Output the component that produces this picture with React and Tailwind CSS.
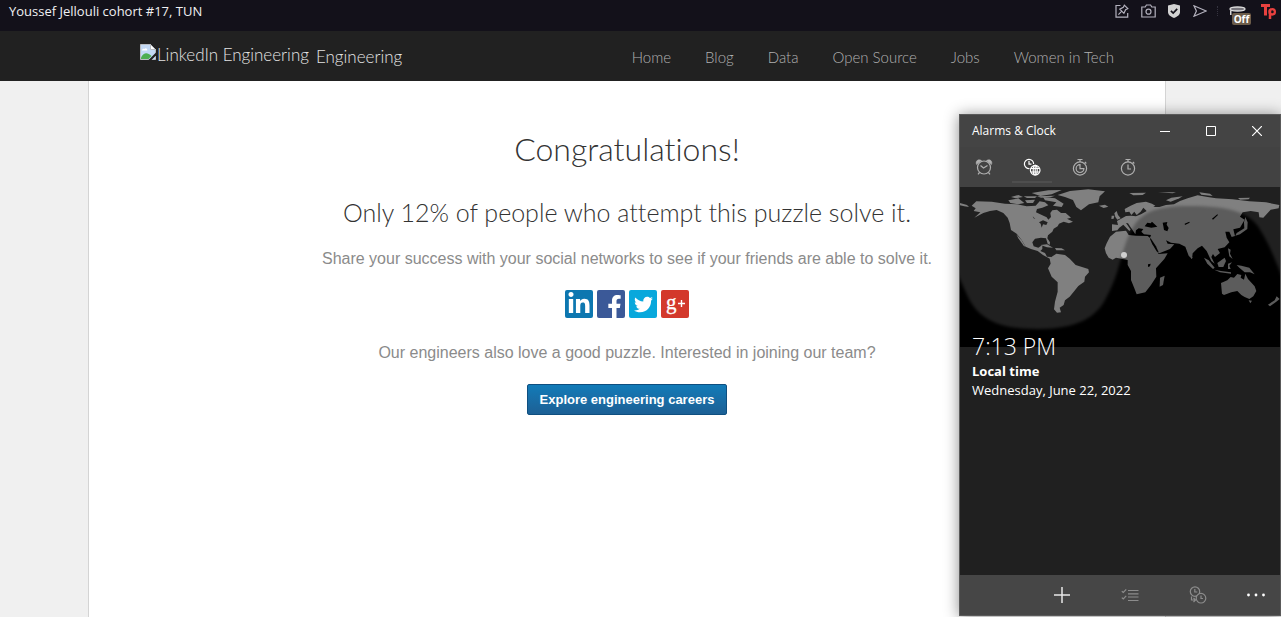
import React from "react";
import { FaFacebookF, FaLinkedinIn, FaTwitter } from "react-icons/fa";

const NAV = ["Home", "Blog", "Data", "Open Source", "Jobs", "Women in Tech"];

function TopBar() {
  return (
    <header className="flex h-[31px] items-start justify-between bg-[#13111a] pl-[9px]">
      <p className="font-['Open_Sans','Noto_Sans',sans-serif] text-[13px] leading-[23px] text-[#f0f0f2]">
        Youssef Jellouli cohort #17, TUN
      </p>
      <div className="flex items-start text-[#b4b2be]">
        <button aria-label="Pin" className="flex h-[22px] w-[26px] items-center justify-center">
          <svg width="14" height="14" viewBox="0 0 14 14" fill="none" stroke="currentColor" strokeWidth="1.2">
            <path d="M5.5 1.5H1v11.7h11.7V9" />
            <path d="M9.3 1.2 12.8 4.7 10.6 5.8 8.9 9.3 4.8 5.2 8.3 3.4zM6.8 7.2 3.4 10.7" />
          </svg>
        </button>
        <button aria-label="Snapshot" className="flex h-[22px] w-[26px] items-center justify-center">
          <svg width="15" height="14" viewBox="0 0 15 14" fill="none" stroke="currentColor" strokeWidth="1.2">
            <path d="M.8 3h3.4l1.2-2h4.2l1.2 2h3.4v10H.8z" />
            <circle cx="7.5" cy="7.7" r="2.5" />
          </svg>
        </button>
        <button aria-label="Blocker" className="flex h-[22px] w-[26px] items-center justify-center">
          <svg width="14" height="14" viewBox="0 0 14 14">
            <path d="M7 0 13 1.6V8c0 3-3 4.800-6 6C4 12.800 1 11 1 8V1.600z" fill="#d3d3d3" />
            <path d="M3.900 6.800 6.200 9 10.200 4.800" fill="none" stroke="#13111a" strokeWidth="1.700" />
          </svg>
        </button>
        <button aria-label="Send" className="flex h-[22px] w-[26px] items-center justify-center">
          <svg width="14" height="12" viewBox="0 0 14 12" fill="none" stroke="currentColor" strokeWidth="1.200">
            <path d="M1 .8 13.200 6 1 11.200 3.400 6z" />
          </svg>
        </button>
        <span className="mx-1 mt-1.5 h-2.5 border-l border-dotted border-[#35333f]" />
        <button aria-label="Extension off" className="mt-1 flex w-[35px] justify-center">
          <svg width="24" height="22" viewBox="0 0 24 22">
            <path d="M2 6v5h1.500V7" fill="#d8d8d8" />
            <ellipse cx="9.500" cy="5" rx="7.500" ry="2" fill="#77757c" stroke="#dcdcdc" strokeWidth="1.300" />
            <rect x="4" y="9" width="19" height="12" rx="2" fill="#6d5d4a" />
            <text x="13.500" y="19" textAnchor="middle" fontSize="10" fontWeight="700" fontFamily="Open Sans, sans-serif" fill="#fff">Off</text>
          </svg>
        </button>
        <button aria-label="Extension" className="mt-[3px] flex w-6 justify-center">
          <svg width="18" height="16" viewBox="0 0 18 16" fill="none" stroke="#e8413f" strokeWidth="3">
            <path d="M1 2.500h9M5.500 2v10.500" />
            <path d="M10 16V6.500" strokeWidth="2.500" />
            <circle cx="12.200" cy="8.800" r="2.700" strokeWidth="2.300" />
          </svg>
        </button>
      </div>
    </header>
  );
}

function BrokenImage() {
  return (
    <svg width="16" height="16" viewBox="0 0 16 16" aria-hidden="true">
      <path d="M.5.5h10l5 5v10H.5z" fill="#c3d9f5" stroke="#b9bcc0" />
      <path d="M2 6.500c0-2 2-2 2.500-1.500 1-1.500 3-.5 2.800 1.500z" fill="#fff" />
      <path d="M1 15v-1.500C4 8.500 7 8 11.500 12L8.500 15z" fill="#4cae50" />
      <path d="M10.500.5v5h5z" fill="#fff" stroke="#b9bcc0" />
      <path d="M8.500 16 16 8.500v3L11.500 16z" fill="#212121" />
    </svg>
  );
}

function SiteHeader() {
  return (
    <div className="bg-[#212121] pr-[27px] font-[Lato,sans-serif] font-light">
      <div className="mx-auto flex h-[50px] max-w-[974px] items-start justify-between">
        <a href="#engineering" className="flex pt-3 text-[17px] leading-6 text-[#e4e4e4]">
          <span className="pt-px"><BrokenImage /></span>
          <span className="pl-px">LinkedIn Engineering</span>
          <span className="pt-0.5 pl-[7px]">Engineering</span>
        </a>
        <nav className="flex gap-[34px] pt-4 text-[15px] leading-5 text-[#b0b0b0]">
          {NAV.map((n) => (
            <a key={n} href="#nav">{n}</a>
          ))}
        </nav>
      </div>
    </div>
  );
}

function Social() {
  const tile = "flex size-7 justify-center rounded-xs text-white";
  return (
    <div className="mt-[19px] flex justify-center gap-1">
      <a href="#linkedin" aria-label="LinkedIn" className={`${tile} items-center bg-[#0d77b0]`}><FaLinkedinIn size={24} /></a>
      <a href="#facebook" aria-label="Facebook" className={`${tile} items-end bg-[#3b5998] pl-[7px]`}><FaFacebookF size={23} /></a>
      <a href="#twitter" aria-label="Twitter" className={`${tile} items-center bg-[#08a8dc]`}><FaTwitter size={19} /></a>
      <a href="#google" aria-label="Google Plus" className={`${tile} items-center bg-[#d3382b]`}>
        <svg width="28" height="28" viewBox="0 0 28 28" className="overflow-visible">
          <text x="5" y="19" fontSize="21" fontFamily="Liberation Serif, serif" fill="#fff" stroke="#fff" strokeWidth=".3">g</text>
          <path d="M17 13.500h7M20.500 10v7" stroke="#fff" strokeWidth="1.400" />
        </svg>
      </a>
    </div>
  );
}

const EAST = [
  "-28,175 -18,155 0,140 30,137 38,150 60,152 95,153 103,160 110,175 118,190 128,207 155,205 145,222 120,250 121,275 105,300 88,322 62,328 55,310 45,285 45,258 35,240 35,225 20,222 0,218 -10,224 -22,218 -30,205 -34,190",
  "132,278 146,272 141,300 131,305",
  "-12,138 -12,118 6,120 3,108 18,100 30,93 45,92 60,94 75,88 92,78 82,68 74,80 62,90 55,80 46,90 40,80 28,82 26,72 44,62 62,54 90,50 108,56 118,62 112,66 130,66 150,60 174,58 192,48 215,40 245,31 275,36 300,40 350,43 400,49 450,52 490,60 488,70 464,74 442,98 430,97 428,82 404,78 380,82 372,95 386,104 372,128 352,133 357,153 347,156 340,140 328,140 332,158 340,172 326,187 305,192 312,204 297,216 291,207 286,216 296,236 286,228 272,198 258,182 245,190 230,205 228,222 218,212 208,185 190,176 165,173 150,166 155,176 175,178 162,192 130,205 124,202 108,172 102,158 105,150 84,148 76,140 82,132 68,130 60,136 58,148 50,136 36,115 30,114 44,134 40,138 22,119 10,128 4,136",
  "-2,96 -5,85 2,78 6,90 14,100 4,104", "-13,92 -5,92 -7,101 -14,102",
  "388,96 395,112 394,132 372,148 358,152 362,144 385,130 384,112",
  "264,218 278,226 296,248 291,252 274,236", "295,254 315,258 345,262 345,266 312,262",
  "304,234 326,218 330,228 322,246 308,246", "336,236 348,232 340,242 344,252 336,252",
  "336,190 344,194 342,206 350,222 340,214", "362,240 376,242 400,248 416,268 402,262 386,262 370,248",
  "315,294 334,286 344,276 354,278 364,267 376,270 374,278 384,284 388,266 396,282 416,304 421,318 412,334 400,342 386,336 376,330 364,318 346,322 324,330 318,326",
  "398,346 408,347 403,355", "482,334 491,342 481,350 462,364 456,359 476,346", "224,212 230,218 226,222",
  "40,24 90,23 80,30 52,31", "150,46 166,38 200,34 190,40 164,50", "250,22 282,26 290,33 256,29", "366,39 402,38 398,43 372,44", "126,22 180,22 170,25",
];
const WEST = [
  "50,62 64,49 110,50 150,56 186,58 215,64 242,62 254,49 270,52 280,61 262,68 246,72 243,82 262,91 275,97 280,104 288,96 286,84 292,76 306,74 318,84 332,84 348,98 336,101 354,110 342,115 326,110 312,116 308,124 296,131 292,140 279,151 277,160 285,172 284,180 278,176 273,160 258,158 240,161 232,172 236,184 250,188 262,180 262,192 256,198 270,204 276,215 290,216 286,222 264,210 248,198 228,192 212,185 200,165 185,146 168,135 164,114 158,98 145,84 125,75 105,78 85,84 58,98 76,82 56,78 62,70",
  "284,220 304,206 330,210 345,222 362,240 400,252 402,262 390,275 388,290 370,303 355,322 344,335 330,346 326,360 314,368 318,382 306,383 297,373 300,350 308,320 308,292 290,275 279,250 287,236",
  "308,30 345,18 400,13 450,19 434,34 430,52 402,58 378,76 364,66 354,45 330,36",
  "256,180 276,178 294,188 276,187", "300,189 320,190 330,196 304,196", "432,62 450,59 460,65 446,69",
  "160,46 190,40 208,54 190,58 166,54", "168,36 190,30 204,36 182,40", "210,46 240,44 234,54 216,54",
  "206,34 246,34 240,39 216,39", "230,24 280,16 320,15 290,28 256,33", "264,36 300,40 326,56 320,66 294,62 304,52 270,46",
  "246,34 300,32 286,37 258,38", "184,148 200,166 212,186 206,182 190,160", "15,54 36,60 42,66 28,64 15,61",
];

function Land({ color }) {
  return (
    <g fill={color}>
      <g transform="translate(156 -2) scale(.3333)">{EAST.map((p) => <polygon key={p} points={p} />)}</g>
      <g transform="translate(-5 -2) scale(.3333)">{WEST.map((p) => <polygon key={p} points={p} />)}</g>
    </g>
  );
}

function Lakes({ color }) {
  return (
    <g transform="translate(156 -2) scale(.3333)" fill={color}>
      <path d="M86 124l8-11 10 2 4-5 16 15-18 3zM140 113l14-2-2 8 6 10-4 10-10-4-2-12zM96 238l8-2-2 8-6 2z" />
      <path d="M206 116l14-6 1 3-14 7zM288 101l16-13 2 2-15 14z" />
      <path d="M-231 112l12-6 14 6-4 8-10-2-4 10-3-12zM-250 94l8 8-5-2z" />
      <path d="M104 160l16 24 8 18-5-2-14-22-7-16z" />
    </g>
  );
}

function WorldMap() {
  return (
    <svg viewBox="0 0 320 160" className="block w-full" role="img" aria-label="World map">
      <defs>
        <filter id="soft" x="-10%" y="-10%" width="120%" height="120%"><feGaussianBlur stdDeviation="1.800" /></filter>
        <mask id="day">
          <path filter="url(#soft)" fill="#fff" d="M-12-15H332V112C316 78 314 66 302 46C292 25 270 19 229 19C194 19 180 26 171 44C160 65 161 84 146 111C137 130 117 142 78 142C41 142 20 134 8 110L-12 66z" />
        </mask>
      </defs>
      <rect width="320" height="160" fill="#000" />
      <Land color="#5c5c5c" />
      <Lakes color="#000" />
      <g mask="url(#day)">
        <rect width="320" height="160" fill="#202020" />
        <Land color="#808080" />
        <Lakes color="#202020" />
      </g>
      <circle cx="164" cy="68" r="3" fill="#d0d0d0" />
    </svg>
  );
}

function Icon({ children }) {
  return (
    <svg width="18" height="18" viewBox="0 0 18 18" fill="none" stroke="currentColor" strokeWidth="1.200">
      {children}
    </svg>
  );
}

function ClockWindow() {
  const tab = "flex h-10 w-12 items-center justify-center";
  const win = "flex h-8 w-[46px] items-center justify-center";
  const cmd = "flex h-10 w-[68px] items-center justify-center";
  return (
    <section className="absolute top-[114px] right-0 bottom-px flex w-[322px] flex-col border border-[#5a5a5a] bg-[#202020] font-['Open_Sans','Noto_Sans',sans-serif] text-white shadow-[0_1px_14px_rgba(0,0,0,0.45)]">
      <div className="flex items-center bg-[#444]">
        <h2 className="flex-1 pl-3 text-[12px] leading-8">Alarms &amp; Clock</h2>
        <button aria-label="Minimize" className={win}><svg width="10" height="10"><path d="M0 5.500h10" stroke="#fff" /></svg></button>
        <button aria-label="Maximize" className={win}><svg width="10" height="10"><path d="M.5.5h9v9h-9z" fill="none" stroke="#fff" /></svg></button>
        <button aria-label="Close" className={win}><svg width="10" height="10"><path d="M0 0l10 10M10 0L0 10" stroke="#fff" strokeWidth="1.200" /></svg></button>
      </div>
      <div className="flex bg-[#424242] text-[#b0b0b0]">
        <button aria-label="Alarm" className={tab}>
          <Icon>
            <circle cx="9" cy="9.500" r="6.500" />
            <path d="M5.500 7.500 8.500 10 12.500 7.500M4.500 14.500l-1.500 1.800M13.500 14.500l1.500 1.800" />
            <path d="M1.500 6.500C0 3 3.500.5 6.500 2.500zM16.500 6.500C18 3 14.500.5 11.500 2.500z" fill="currentColor" strokeWidth=".5" />
          </Icon>
        </button>
        <button aria-label="World clock" className="mx-1 flex h-9 w-10 items-center justify-center border-b-2 border-[#4e4e4e] pt-1.5 text-white">
          <Icon>
            <path d="M6.500 10.500A4.600 4.600 0 1 1 10.600 6M6 3v3.200h2.500" />
            <circle cx="12.200" cy="12.200" r="4.800" />
            <ellipse cx="12.200" cy="12.200" rx="2" ry="4.800" />
            <path d="M8 10.500h8.500M8 14h8.500M12.200 7.500v9.500" />
          </Icon>
        </button>
        <button aria-label="Timer" className={tab}>
          <Icon>
            <circle cx="9" cy="10.500" r="6.600" /><path d="M9 6.700a3.900 3.900 0 1 0 3.900 3.900H9zM6.500 1.500h5M9 1.500V4M13.800 4l1.500 1.500" />
          </Icon>
        </button>
        <button aria-label="Stopwatch" className={tab}>
          <Icon>
            <circle cx="9" cy="10.500" r="6.600" /><path d="M9 6.500v4.500h3M6.500 1.500h5M9 1.500V4M13.800 4l1.500 1.500" />
          </Icon>
        </button>
      </div>
      <WorldMap />
      <div className="relative -mt-[17px] flex-1 pl-3">
        <p className="text-[23px] leading-8 font-light">7:13 PM</p>
        <p className="text-[13px] leading-[18px] font-bold">Local time</p>
        <p className="text-[13px] leading-5">Wednesday, June 22, 2022</p>
      </div>
      <div className="flex justify-end bg-[#464646] text-[#8c8c8c]">
        <button aria-label="Add" className={cmd}><svg width="16" height="16"><path d="M0 8h16M8 0v16" stroke="#e8e8e8" strokeWidth="1.500" /></svg></button>
        <button aria-label="Select" className={cmd}>
          <Icon><path d="M7 4.500h10.500M7 7.800h10.500M7 11h10.500M7 14.500h10.500M.8 5.200 2.300 6.500 5.200 3.300M.8 11.600 2.300 13 5.200 9.800" /></Icon>
        </button>
        <button aria-label="Compare" className={cmd}>
          <Icon>
            <circle cx="6" cy="5.600" r="4.700" /><circle cx="12" cy="12.200" r="4.800" fill="#464646" />
            <path d="M5.800 3v3h2.500M12 9.500v3h2M2.500 10.500V14H6M4.500 12l2 2-2 2" />
          </Icon>
        </button>
        <button aria-label="More" className="flex h-10 w-12 items-center justify-center">
          <svg width="18" height="4" fill="#fff"><circle cx="1.500" cy="2" r="1.400" /><circle cx="9" cy="2" r="1.400" /><circle cx="16.500" cy="2" r="1.400" /></svg>
        </button>
      </div>
    </section>
  );
}

export default function App() {
  return (
    <div className="relative flex min-h-screen flex-col overflow-hidden bg-[#f0f0f0] [font-variant-ligatures:none]">
      <TopBar />
      <SiteHeader />
      <div className="flex flex-1 pr-[27px]">
        <main className="mx-auto w-full max-w-[1078px] border-x border-[#d4d4d4] bg-white pt-[44px] text-center font-['Liberation_Sans',Arial,sans-serif] text-[#8b8b8b]">
          <h1 className="font-[Lato,sans-serif] text-[32px] leading-[48px] font-light text-[#333]">Congratulations!</h1>
          <h2 className="mt-[21px] font-[Lato,sans-serif] text-[25px] leading-9 font-light text-[#333]">
            Only 12% of people who attempt this puzzle solve it.
          </h2>
          <p className="mt-[17px] text-base leading-6">
            Share your success with your social networks to see if your friends are able to solve it.
          </p>
          <Social />
          <p className="mt-[23px] text-base leading-6">Our engineers also love a good puzzle. Interested in joining our team?</p>
          <a
            href="#careers"
            className="mt-[19px] inline-block rounded-xs border border-[#0f4f80] bg-linear-to-b from-[#117bb8] to-[#1c6095] px-3 text-[13px] leading-[29px] font-bold text-white"
          >
            Explore engineering careers
          </a>
        </main>
      </div>
      <ClockWindow />
    </div>
  );
}
